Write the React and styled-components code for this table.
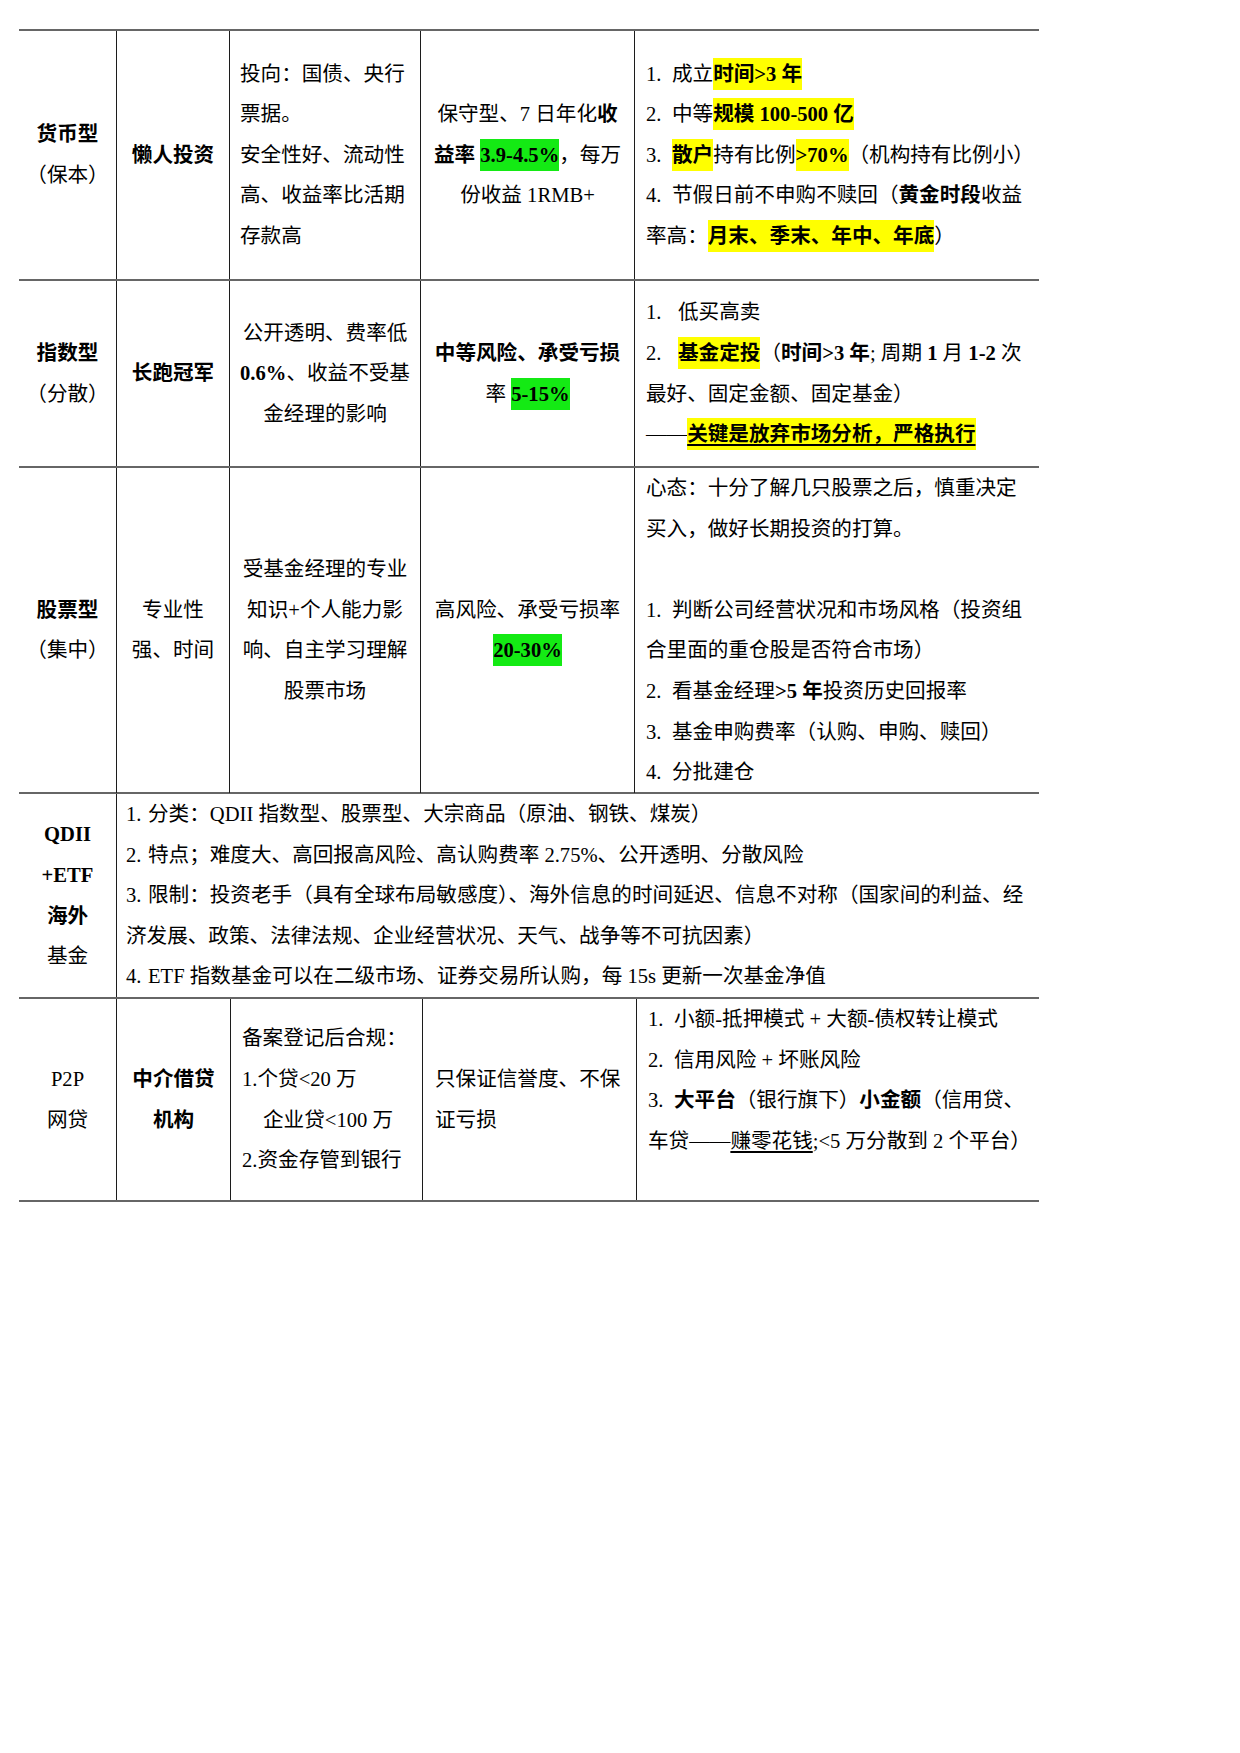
import React from "react";
import styled, { createGlobalStyle } from "styled-components";

const Global = createGlobalStyle`
  html, body { margin: 0; padding: 0; background: #ffffff; }
  body {
    font-family: "Liberation Serif", "Noto Sans CJK SC", serif;
    color: #000;
  }
`;

const Page = styled.div`
  width: 1240px;
  min-height: 1753px;
  box-sizing: border-box;
  padding: 29px 0 0 19px;
`;

const Table = styled.div`
  width: 1020px;
  display: flex;
  flex-direction: column;
  border-top: 2px solid #666;
`;

const Row = styled.div`
  display: grid;
  grid-template-columns: ${(p) => p.$cols || "97px 113px 191px 214px 1fr"};
  height: ${(p) => p.$h}px;
  box-sizing: border-box;
  border-bottom: 2px solid #666;
`;

const Cell = styled.div`
  display: flex;
  flex-direction: column;
  justify-content: ${(p) => (p.$top ? "flex-start" : "center")};
  align-items: ${(p) => (p.$left ? "flex-start" : "center")};
  text-align: ${(p) => (p.$left ? "left" : "center")};
  padding-left: ${(p) => p.$pl || 0}px;
  border-left: ${(p) => (p.$first ? "none" : "1px solid #1c1c1c")};
  grid-column: ${(p) => p.$span || "auto"};
  font-size: 20.6px;
  line-height: 40.6px;
  font-weight: ${(p) => (p.$bold ? 700 : 400)};
  white-space: nowrap;
  min-width: 0;
`;

const Line = styled.div`
  padding-left: ${(p) => p.$indent || 0}px;
  min-height: 40.6px;
`;

const Num = styled.span`
  display: inline-block;
  width: ${(p) => p.$w || 26}px;
`;

const B = styled.b`
  font-weight: 700;
`;

const Mark = styled.span`
  background: ${(p) => (p.$green ? "#14ea14" : "#ffff00")};
  padding: 5px 0;
  font-weight: 700;
  text-decoration: ${(p) => (p.$u ? "underline" : "none")};
  text-underline-offset: 3px;
`;

const U = styled.span`
  text-decoration: underline;
  text-underline-offset: 3px;
`;

export default function App() {
  return (
    <>
      <Global />
      <Page>
        <Table>
          {/* 货币型 */}
          <Row $h={250}>
            <Cell $first>
              <Line><B>货币型</B></Line>
              <Line>（保本）</Line>
            </Cell>
            <Cell $bold>
              <Line>懒人投资</Line>
            </Cell>
            <Cell $left $pl={10}>
              <Line>投向：国债、央行</Line>
              <Line>票据。</Line>
              <Line>安全性好、流动性</Line>
              <Line>高、收益率比活期</Line>
              <Line>存款高</Line>
            </Cell>
            <Cell>
              <Line>保守型、7 日年化<B>收</B></Line>
              <Line><B>益率</B> <Mark $green>3.9-4.5%</Mark>，每万</Line>
              <Line>份收益 1RMB+</Line>
            </Cell>
            <Cell $left $pl={11}>
              <Line><Num>1.</Num>成立<Mark>时间&gt;3 年</Mark></Line>
              <Line><Num>2.</Num>中等<Mark>规模 100-500 亿</Mark></Line>
              <Line><Num>3.</Num><Mark>散户</Mark>持有比例<Mark>&gt;70%</Mark>（机构持有比例小）</Line>
              <Line><Num>4.</Num>节假日前不申购不赎回（<B>黄金时段</B>收益</Line>
              <Line>率高：<Mark>月末、季末、年中、年底</Mark>）</Line>
            </Cell>
          </Row>

          {/* 指数型 */}
          <Row $h={187}>
            <Cell $first>
              <Line><B>指数型</B></Line>
              <Line>（分散）</Line>
            </Cell>
            <Cell $bold>
              <Line>长跑冠军</Line>
            </Cell>
            <Cell>
              <Line>公开透明、费率低</Line>
              <Line><B>0.6%</B>、收益不受基</Line>
              <Line>金经理的影响</Line>
            </Cell>
            <Cell>
              <Line><B>中等风险、承受亏损</B></Line>
              <Line>率 <Mark $green>5-15%</Mark></Line>
            </Cell>
            <Cell $left $pl={11}>
              <Line><Num $w={32}>1.</Num>低买高卖</Line>
              <Line>
                <Num $w={32}>2.</Num><Mark>基金定投</Mark>（<B>时间&gt;3 年</B>; 周期 <B>1</B> 月 <B>1-2</B> 次
              </Line>
              <Line>最好、固定金额、固定基金）</Line>
              <Line>——<Mark $u>关键是放弃市场分析，严格执行</Mark></Line>
            </Cell>
          </Row>

          {/* 股票型 */}
          <Row $h={326}>
            <Cell $first>
              <Line><B>股票型</B></Line>
              <Line>（集中）</Line>
            </Cell>
            <Cell>
              <Line>专业性</Line>
              <Line>强、时间</Line>
            </Cell>
            <Cell>
              <Line>受基金经理的专业</Line>
              <Line>知识+个人能力影</Line>
              <Line>响、自主学习理解</Line>
              <Line>股票市场</Line>
            </Cell>
            <Cell>
              <Line>高风险、承受亏损率</Line>
              <Line><Mark $green>20-30%</Mark></Line>
            </Cell>
            <Cell $left $top $pl={11}>
              <Line>心态：十分了解几只股票之后，慎重决定</Line>
              <Line>买入，做好长期投资的打算。</Line>
              <Line />
              <Line><Num>1.</Num>判断公司经营状况和市场风格（投资组</Line>
              <Line>合里面的重仓股是否符合市场）</Line>
              <Line><Num>2.</Num>看基金经理<B>&gt;5 年</B>投资历史回报率</Line>
              <Line><Num>3.</Num>基金申购费率（认购、申购、赎回）</Line>
              <Line><Num>4.</Num>分批建仓</Line>
            </Cell>
          </Row>

          {/* QDII */}
          <Row $h={205}>
            <Cell $first>
              <Line><B>QDII</B></Line>
              <Line><B>+ETF</B></Line>
              <Line><B>海外</B></Line>
              <Line>基金</Line>
            </Cell>
            <Cell $left $pl={9} $span="2 / -1">
              <Line><Num $w={22}>1.</Num>分类：QDII 指数型、股票型、大宗商品（原油、钢铁、煤炭）</Line>
              <Line><Num $w={22}>2.</Num>特点；难度大、高回报高风险、高认购费率 2.75%、公开透明、分散风险</Line>
              <Line><Num $w={22}>3.</Num>限制：投资老手（具有全球布局敏感度）、海外信息的时间延迟、信息不对称（国家间的利益、经</Line>
              <Line>济发展、政策、法律法规、企业经营状况、天气、战争等不可抗因素）</Line>
              <Line><Num $w={22}>4.</Num>ETF 指数基金可以在二级市场、证券交易所认购，每 15s 更新一次基金净值</Line>
            </Cell>
          </Row>

          {/* P2P */}
          <Row $h={203} $cols="97px 114px 192px 214px 1fr">
            <Cell $first>
              <Line>P2P</Line>
              <Line>网贷</Line>
            </Cell>
            <Cell $bold>
              <Line>中介借贷</Line>
              <Line>机构</Line>
            </Cell>
            <Cell $left $pl={11}>
              <Line>备案登记后合规：</Line>
              <Line>1.个贷&lt;20 万</Line>
              <Line $indent={21}>企业贷&lt;100 万</Line>
              <Line>2.资金存管到银行</Line>
            </Cell>
            <Cell $left $pl={12}>
              <Line>只保证信誉度、不保</Line>
              <Line>证亏损</Line>
            </Cell>
            <Cell $left $top $pl={11}>
              <Line><Num>1.</Num>小额-抵押模式 + 大额-债权转让模式</Line>
              <Line><Num>2.</Num>信用风险 + 坏账风险</Line>
              <Line><Num>3.</Num><B>大平台</B>（银行旗下）<B>小金额</B>（信用贷、</Line>
              <Line>车贷——<U>赚零花钱</U>;&lt;5 万分散到 2 个平台）</Line>
            </Cell>
          </Row>
        </Table>
      </Page>
    </>
  );
}
